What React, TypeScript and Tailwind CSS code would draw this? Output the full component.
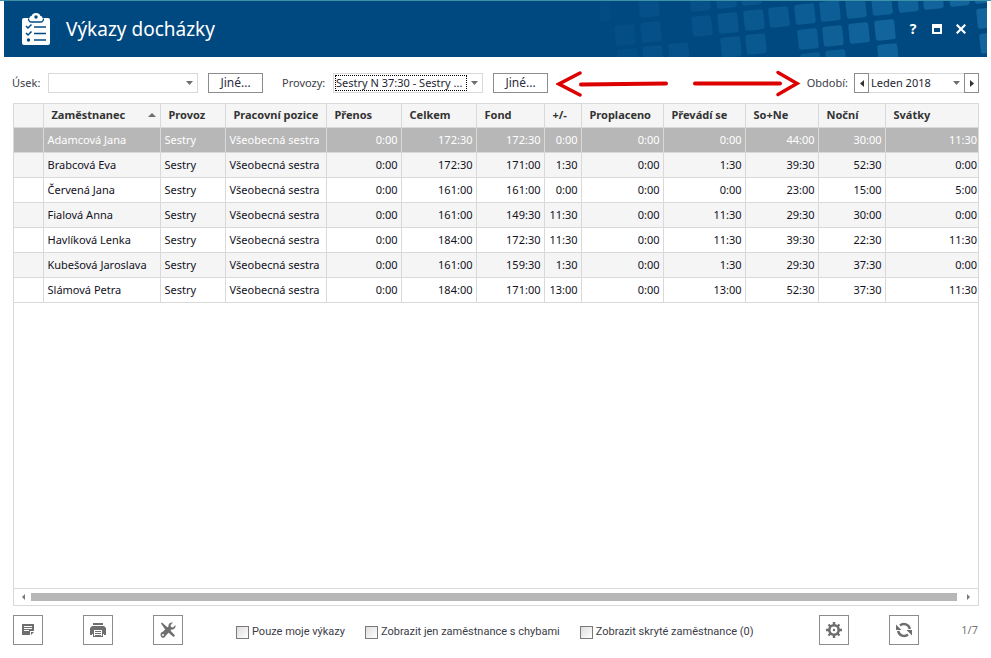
import type { ReactNode } from "react";
import clsx from "clsx";

type Column = { label: string; width?: string; sorted?: boolean };

const COLUMNS: Column[] = [
  { label: "", width: "w-[29px]" },
  { label: "Zaměstnanec", width: "w-[117px]", sorted: true },
  { label: "Provoz", width: "w-[65px]" },
  { label: "Pracovní pozice", width: "w-[101px]" },
  { label: "Přenos", width: "w-[75px]" },
  { label: "Celkem", width: "w-[75px]" },
  { label: "Fond", width: "w-[68px]" },
  { label: "+/-", width: "w-[37px]" },
  { label: "Proplaceno", width: "w-[82px]" },
  { label: "Převádí se", width: "w-[82px]" },
  { label: "So+Ne", width: "w-[73px]" },
  { label: "Noční", width: "w-[67px]" },
  { label: "Svátky" },
];

const ROWS = [
  { name: "Adamcová Jana", times: ["0:00", "172:30", "172:30", "0:00", "0:00", "0:00", "44:00", "30:00", "11:30"] },
  { name: "Brabcová Eva", times: ["0:00", "172:30", "171:00", "1:30", "0:00", "1:30", "39:30", "52:30", "0:00"] },
  { name: "Červená Jana", times: ["0:00", "161:00", "161:00", "0:00", "0:00", "0:00", "23:00", "15:00", "5:00"] },
  { name: "Fialová Anna", times: ["0:00", "161:00", "149:30", "11:30", "0:00", "11:30", "29:30", "30:00", "0:00"] },
  { name: "Havlíková Lenka", times: ["0:00", "184:00", "172:30", "11:30", "0:00", "11:30", "39:30", "22:30", "11:30"] },
  { name: "Kubešová Jaroslava", times: ["0:00", "161:00", "159:30", "1:30", "0:00", "1:30", "29:30", "37:30", "0:00"] },
  { name: "Slámová Petra", times: ["0:00", "184:00", "171:00", "13:00", "0:00", "13:00", "52:30", "37:30", "11:30"] },
];

// center x, center y, opacity
const TILES = [
  [0, 12, 0.1], [49, 7, 0.25], [100, 1, 0.3], [126, -2, 0.4], [151, -5, 0.45],
  [25, 35, 0.2], [51, 32, 0.25], [102, 26, 0.35], [128, 23, 0.45], [154, 20, 0.5], [179, 17, 0.55],
  [205, 14, 0.65], [230, 11, 0.7], [256, 8, 0.75], [282, 5, 0.8], [308, 2, 0.85], [333, -1, 0.9], [359, -4, 0.9], [384, -7, 0.9],
  [28, 59, 0.2], [53, 56, 0.3], [79, 53, 0.3], [131, 47, 0.45], [156, 44, 0.5],
  [208, 39, 0.65], [233, 36, 0.75], [259, 33, 0.85], [285, 30, 0.9], [387, 18, 0.9],
  [211, 63, 0.6], [236, 60, 0.65], [288, 54, 0.85], [390, 43, 0.9],
];

function HeaderPattern() {
  return (
    <svg className="absolute top-0 right-0 h-full w-[387px]" viewBox="0 1 387 56" aria-hidden="true">
      {TILES.map(([x, y, o]) => (
        <rect
          key={`${x}-${y}`}
          x={x - 10}
          y={y - 10}
          width="20"
          height="20"
          rx="2.5"
          fill="#13689f"
          opacity={o}
          transform={`rotate(-6 ${x} ${y})`}
        />
      ))}
    </svg>
  );
}

function ClipboardIcon() {
  return (
    <svg className="h-8 w-7" viewBox="0 0 28 32" aria-hidden="true">
      <path fill="#fff" d="M2 5h5.500a2 2 0 0 1 2-2c.6-1.800 2.200-3 4.500-3s3.900 1.200 4.500 3a2 2 0 0 1 2 2H26a2 2 0 0 1 2 2v23a2 2 0 0 1-2 2H2a2 2 0 0 1-2-2V7a2 2 0 0 1 2-2z" />
      <circle cx="14" cy="4" r="1.700" fill="#004880" />
      <path d="M6.500 5.500c0 2 1 3.500 3 3.500h9c2 0 3-1.500 3-3.500" fill="none" stroke="#004880" strokeWidth="1.300" />
      <path d="M4 13l2 2 3.500-3.500M4 20l2 2 3.500-3.500" fill="none" stroke="#004880" strokeWidth="1.500" />
      <circle cx="6.500" cy="27" r="1.700" fill="#004880" />
      <path d="M12 14h12M12 20.500h12M12 27h12" stroke="#004880" strokeWidth="1.500" />
    </svg>
  );
}

function Dropdown({ label, value, focused, className }: { label: string; value: string; focused?: boolean; className?: string }) {
  return (
    <div className={clsx("flex h-5 items-center border border-[#d9d9d9] bg-white", className)}>
      <select
        aria-label={label}
        defaultValue={value}
        className={clsx(
          "ml-px h-4 min-w-0 flex-1 appearance-none border border-dotted bg-transparent text-[11px] leading-[14px] text-[#1e1e32] outline-none",
          focused ? "border-black" : "border-transparent",
        )}
      >
        <option value={value}>{value}</option>
      </select>
      <svg className="pointer-events-none mx-1 h-2 w-[7px] shrink-0" viewBox="0 0 7 8" fill="#6e6e6e" aria-hidden="true">
        <path d="M0 2h7L3.500 6z" />
      </svg>
    </div>
  );
}

function OtherButton() {
  return (
    <button type="button" className="ml-[10px] h-5 w-[55px] shrink-0 border border-[#8c8c8c] bg-white text-xs leading-4 text-[#2d2d44]">
      Jiné...
    </button>
  );
}

function StepButton({ label, path }: { label: string; path: string }) {
  return (
    <button type="button" aria-label={label} className="flex h-5 w-[15px] shrink-0 items-center justify-center border border-[#8c8c8c] bg-white">
      <svg className="h-[7px] w-1" viewBox="0 0 4 7" fill="#333" aria-hidden="true">
        <path d={path} />
      </svg>
    </button>
  );
}

function ToolButton({ label, children }: { label: string; children: ReactNode }) {
  return (
    <button type="button" aria-label={label} className="flex size-[30px] shrink-0 items-center justify-center border border-[#8c8c8c] bg-white text-[#6e6e6e]">
      <svg className="size-4" viewBox="0 0 16 16" fill="currentColor" aria-hidden="true">
        {children}
      </svg>
    </button>
  );
}

function Check({ children }: { children: ReactNode }) {
  return (
    <label className="flex items-center gap-[3px] whitespace-nowrap">
      <input type="checkbox" className="size-[13px] appearance-none border border-[#7a7a7a] bg-gradient-to-br from-[#dedede] to-white checked:bg-[#6e6e6e]" />
      {children}
    </label>
  );
}

export default function App() {
  return (
    <div className="flex min-h-screen flex-col border-t border-[#3c93a8] bg-white font-['Noto_Sans','Open_Sans',sans-serif] text-[11px] text-[#3c3c46]">
      <header className="relative mx-1 flex h-14 shrink-0 items-center overflow-hidden bg-[#004880] pr-5 pl-[18px] text-white">
        <HeaderPattern />
        <ClipboardIcon />
        <h1 className="ml-4 text-[19px]">Výkazy docházky</h1>
        <div className="relative ml-auto flex items-center gap-3">
          <button type="button" aria-label="Nápověda" className="w-3 text-center text-sm leading-4 font-bold">?</button>
          <button type="button" aria-label="Maximalizovat" className="flex w-3 justify-center">
            <svg className="size-[10px]" viewBox="0 0 10 10" fill="#fff" aria-hidden="true">
              <path fillRule="evenodd" d="M0 0h10v10H0zM2 4v4h6V4z" />
            </svg>
          </button>
          <button type="button" aria-label="Zavřít" className="flex w-3 justify-center">
            <svg className="size-[10px]" viewBox="0 0 10 10" aria-hidden="true">
              <path d="M.7.7l8.600 8.600M9.300.7L.7 9.300" stroke="#fff" strokeWidth="2.200" />
            </svg>
          </button>
        </div>
      </header>

      <div className="flex shrink-0 items-center pt-3 pr-3 pl-3">
        <span className="w-9">Úsek:</span>
        <Dropdown label="Úsek" value="" className="w-[150px]" />
        <OtherButton />
        <span className="ml-[19px] w-[51px]">Provozy:</span>
        <Dropdown label="Provozy" value="Sestry N 37:30 - Sestry ..." focused className="w-[150px]" />
        <OtherButton />
        <svg className="ml-2 h-7 w-28" viewBox="0 0 112 28" fill="none" stroke="#dd0000" aria-hidden="true">
          <path d="M25 15.500L110 14.500" strokeWidth="4" strokeLinecap="round" />
          <path d="M24 4L3 15l21 11" strokeWidth="3.500" strokeLinecap="round" />
        </svg>
        <svg className="ml-6 h-7 w-[110px]" viewBox="0 0 110 28" fill="none" stroke="#dd0000" aria-hidden="true">
          <path d="M3 14.500h85" strokeWidth="4" strokeLinecap="round" />
          <path d="M86 3.500L105 14.500l-19 11" strokeWidth="3.500" strokeLinecap="round" />
        </svg>
        <span className="mr-[6px] ml-auto">Období:</span>
        <StepButton label="Předchozí období" path="M4 0v7L0 3.500z" />
        <Dropdown label="Období" value="Leden 2018" className="w-[95px] border-x-0" />
        <StepButton label="Další období" path="M0 0v7l4-3.500z" />
      </div>

      <main className="mt-[6px] mr-3 ml-[13px] flex flex-1 flex-col border border-[#d9d9d9]">
        <table className="w-full table-fixed border-collapse">
          <thead>
            <tr className="h-[23px] bg-[#f5f5f5]">
              {COLUMNS.map((col) => (
                <th
                  key={col.label}
                  scope="col"
                  className={clsx("border-r border-b border-[#d9d9d9] pr-1 pl-2 text-left leading-4 font-bold whitespace-nowrap text-[#333] last:border-r-0", col.width)}
                >
                  <span className="flex items-center justify-between">
                    {col.label}
                    {col.sorted && (
                      <svg className="h-1 w-2" viewBox="0 0 8 4" fill="#6e6e6e" aria-hidden="true">
                        <path d="M0 4h8L4 0z" />
                      </svg>
                    )}
                  </span>
                </th>
              ))}
            </tr>
          </thead>
          <tbody>
            {ROWS.map((row, i) => (
              <tr
                key={row.name}
                className={clsx(
                  "h-[25px] whitespace-nowrap *:border-r *:border-b *:border-[#d9d9d9] *:leading-4 *:last:border-r-0",
                  i === 0 ? "bg-[#b7b7b7] text-white" : "text-[#111122]",
                  i % 2 === 1 && "bg-[#f5f5f5]",
                )}
              >
                <td />
                <td className="pl-1">{row.name}</td>
                <td className="pl-1">Sestry</td>
                <td className="pl-1">Všeobecná sestra</td>
                {row.times.map((time, j) => (
                  <td key={j} className="pr-[3px] text-right last:pr-px">{time}</td>
                ))}
              </tr>
            ))}
          </tbody>
        </table>
        <div className="mt-auto flex h-[17px] items-center gap-[6px] border-t border-[#d9d9d9] px-2">
          <svg className="h-[6px] w-[3px]" viewBox="0 0 3 6" fill="#777" aria-hidden="true"><path d="M3 0v6L0 3z" /></svg>
          <div className="mr-1 h-2 flex-1 bg-[#b7b7b7]" />
          <svg className="h-[6px] w-[3px]" viewBox="0 0 3 6" fill="#777" aria-hidden="true"><path d="M0 0v6l3-3z" /></svg>
        </div>
      </main>

      <footer className="mt-[9px] mb-[13px] flex shrink-0 items-center px-[13px]">
        <div className="flex gap-10">
          <ToolButton label="Poznámka">
            <path fillRule="evenodd" d="M2 2h12v7h-4v4H2zM4 4v1h8V4zM4 6v1h8V6zM4 8v1h5V8z" />
            <path d="M11 10h3l-3 3z" />
          </ToolButton>
          <ToolButton label="Tisk">
            <path d="M3 1h10v2H3z" />
            <path fillRule="evenodd" d="M2 4h12l2 2v7h-2V7H2v6H0V6z" />
            <path fillRule="evenodd" d="M1 5h14v7h-2v3H3v-3H1zM4 8v6h8V8z" />
            <path d="M5 9h6v1H5zM5 11h6v1H5zM5 13h6v1H5z" />
          </ToolButton>
          <ToolButton label="Nástroje">
            <path d="M1 1.500L2 .5l5.500 5 7.500 8-1.500 1.500-8-7z" />
            <path d="M15.500 3L13 5.500l-2-.5-.5-2L13 .5C10.500 0 8 1.500 8.500 4.500L2.500 10C.5 10.500 0 12.500 1 14.500s4 1.500 4.500-.5l6-6.500c2.500.5 4.500-2 4-4.500zM3 12a1 1 0 1 1 0 2 1 1 0 0 1 0-2z" fillRule="evenodd" />
          </ToolButton>
        </div>
        <div className="ml-[53px] flex gap-5 pt-1 font-[Roboto,'Noto_Sans',sans-serif]">
          <Check>Pouze moje výkazy</Check>
          <Check>Zobrazit jen zaměstnance s chybami</Check>
          <Check>Zobrazit skryté zaměstnance (0)</Check>
        </div>
        <div className="ml-auto flex gap-10">
          <ToolButton label="Nastavení">
            <circle cx="8" cy="8" r="4.700" fill="none" stroke="currentColor" strokeWidth="2.600" />
            <circle cx="8" cy="8" r="1.200" />
            <path d="M8 0v3M8 13v3M0 8h3M13 8h3M2.500 2.500l2 2M11.500 11.500l2 2M2.500 13.500l2-2M11.500 4.500l2-2" stroke="currentColor" strokeWidth="2.400" />
          </ToolButton>
          <ToolButton label="Obnovit">
            <path d="M13.800 7A6 6 0 0 0 4 3.500M2.200 9a6 6 0 0 0 9.800 3.500" fill="none" stroke="currentColor" strokeWidth="2.500" />
            <path d="M0 2.500V8h5.500zM16 13.500V8h-5.500z" />
          </ToolButton>
        </div>
        <span className="ml-[42px] text-[#777]">1/7</span>
      </footer>
    </div>
  );
}
